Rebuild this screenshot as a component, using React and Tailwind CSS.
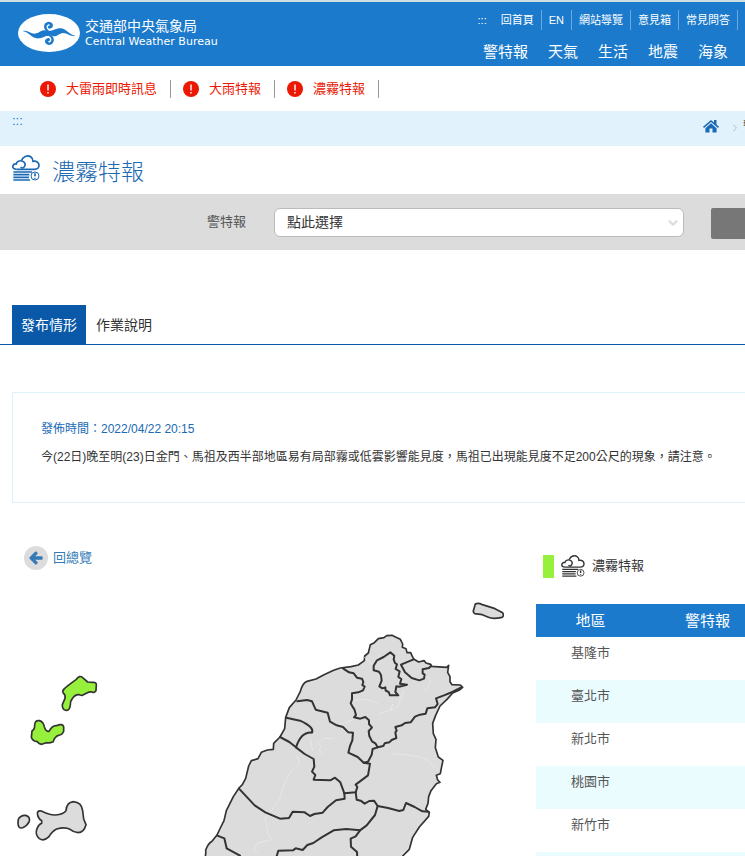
import { FaArrowLeft } from 'react-icons/fa';
import { ChevronDown, ChevronRight } from 'lucide-react';

const topLinks = ['回首頁', 'EN', '網站導覽', '意見箱', '常見問答'];
const mainLinks = ['警特報', '天氣', '生活', '地震', '海象'];
const alerts = ['大雷雨即時訊息', '大雨特報', '濃霧特報'];
const regions = ['基隆市', '臺北市', '新北市', '桃園市', '新竹市', '新竹縣'];

const Logo = () => (
  <svg viewBox="0 0 186 114" className="w-[62px] h-[38px] shrink-0" aria-hidden="true">
    <ellipse cx="93" cy="57" rx="93" ry="57" fill="#fff" />
    <g fill="#1b7acb">
      <path d="M14 51 C30 47 36 59 50 59 C64 58 68 48 80 49 C86 50 92 55 99 58 L91 66 C82 64 78 71 62 73 C42 75 36 55 14 51 Z" />
      <path d="M172 65 C156 69 150 57 136 57 C122 58 118 68 106 67 C100 66 94 61 87 58 L95 50 C104 52 108 45 124 43 C144 41 150 61 172 65 Z" />
      <path d="M92 55 C74 50 73 24 93 23 C108 24 109 43 95 44 C88 43 88 35 94 35 C98 32 93 28 88 33 C83 39 86 48 99 53 Z" />
      <path d="M94 61 C112 66 113 92 93 93 C78 92 77 73 91 72 C98 73 98 81 92 81 C88 84 93 88 98 83 C103 77 100 68 87 63 Z" />
    </g>
  </svg>
);

const HomeIcon = () => (
  <svg viewBox="0 0 16 14" className="h-[14px] w-4 shrink-0" fill="currentColor" aria-hidden="true">
    <path d="M8 1 L11 3.5 V1 H13.5 V5.6 L16 7.8 L15 9 L8 3 L1 9 L0 7.8 Z" />
    <path d="M8 4.3 L13.6 9.2 V13.5 H9.5 V9.6 H6.5 V13.5 H2.4 V9.2 Z" />
  </svg>
);

const FogIcon = ({ className }) => (
  <svg viewBox="0 0 84 78" className={className} fill="none" stroke="currentColor" strokeWidth="5" aria-hidden="true">
    <path d="M14 43 C5 43 1 38 3 32 C5 27 9 26 13 27 C14 19 23 16 30 18 C38 20 42 28 37 35 C34 40 29 40 26 36" />
    <path d="M28 17 C34 3 48 -1 57 6 C62 10 63 15 63 19 C73 17 81 22 81 31 C81 39 75 43 67 43 L14 43" />
    <path d="M4 51 H60 M4 59 H52 M4 67 H51 M4 75 H54" />
    <circle cx="69" cy="63" r="12" strokeWidth="3" />
    <path d="M69 55 V64 M69 68 V71" />
  </svg>
);

const AlertBadge = () => (
  <svg viewBox="0 0 16 16" className="size-4 shrink-0" aria-hidden="true">
    <circle cx="8" cy="8" r="8" fill="#eb1803" />
    <path d="M8 3.5 V9.5 M8 11 V12.5" stroke="#fff" strokeWidth="1.4" />
  </svg>
);

const TaiwanMap = () => (
  <svg viewBox="36 1770 1572 798" className="block w-full" role="img" aria-label="濃霧特報地圖">
    <g stroke="#333" strokeWidth="5" strokeLinejoin="round" strokeLinecap="round" fill="#dcdcdc">
      {/* Matsu and Kinmen */}
      <g transform="translate(0 1590)">
        <path
          fill="#96f03c"
          d="M188 484 Q190 477 200 470 Q216 457 229 448 Q239 434 248 443 L263 456 L278 457 Q290 456 289 465 L288 482 Q284 490 276 486 Q268 485 262 488 L250 494 Q247 498 238 494 Q225 493 217 506 Q210 514 211 525 Q209 542 199 541 Q186 540 187 524 L195 505 Q197 494 190 490 Z"
        />
        <path
          fill="#96f03c"
          d="M96 603 Q105 597 104 585 Q105 570 118 572 Q130 575 133 590 Q137 606 147 604 Q157 586 169 587 Q188 579 191 590 L191 604 Q187 615 176 616 Q163 621 160 635 Q148 640 139 638 L125 643 Q116 641 112 635 Q98 634 94 622 Z"
        />
        <path d="M55 868 Q61 855 77 856 Q91 860 88 874 Q82 887 68 893 Q54 898 54 878 Z" />
        <path d="M113 855 Q109 841 124 843 Q150 856 166 855 Q192 853 198 842 Q200 817 220 815 Q245 817 248 842 L251 867 L258 884 Q252 907 234 908 Q220 906 210 898 Q195 890 170 897 Q157 903 147 920 Q132 935 118 926 Q104 914 111 896 Q116 883 125 880 L125 872 Q115 866 113 855 Z" />
      </g>

      <g transform="translate(570 1860)">
        <path d="M40 730 Q49 705 47 690 Q55 670 66 664 L81 645 L91 624 L102 602 L109 572 L130 530 L147 504 L157 494 L167 475 L176 438 L184 422 L204 416 L214 397 L232 390 L250 388 L251 370 L270 351 L284 326 L287 292 L298 263 L318 240 L331 214 Q338 188 351 184 L378 177 L402 164 L431 151 L451 144 L483 140 L505 135 L523 122 L524 108 L535 99 L541 74 L553 68 L565 56 L582 53 L590 47 L606 46 L618 52 L631 58 L638 72 L637 82 L648 86 L651 98 L662 98 L666 107 L671 117 L686 126 L702 122 L708 129 L722 133 L724 139 L770 142 L776 136 L773 157 L780 170 L780 185 L786 194 L811 195 L818 202 L807 211 L788 219 L771 238 L750 258 L737 286 L728 310 L730 341 L738 358 L736 383 L745 411 L759 421 L755 440 L751 461 L739 466 L743 480 L750 487 L739 491 L723 512 L716 530 L714 550 L707 568 L718 577 L716 589 L688 621 L668 652 L658 688 L636 710 L630 740 Z" />

        {/* rivers */}
        <path
          fill="none"
          stroke="#ebebeb"
          strokeWidth="2"
          d="M523 112 L545 132 M492 242 Q520 234 552 243 L567 255 M565 282 L600 270 L609 251 L602 272 L625 258 L640 212 M700 168 Q725 170 720 190 L705 215 M607 402 L655 404 L710 417 L740 447 M400 402 L388 392 L392 378 L384 370 L398 355 L431 356 M360 358 L368 392 M440 315 L469 307 L500 294 M320 408 L330 428 L298 462 L280 500 L268 541 L225 594 L234 641 L245 659 L201 670 L193 690 L206 704 M635 706 L655 680"
        />

        {/* county borders */}
        <g fill="none" strokeWidth="6">
          <path d="M459 145 L477 157 L491 160 L501 173 L516 176 L520 186 L517 195 L524 200 L519 211 L505 217 L486 220 L486 238 L482 250 L487 259 L493 268 L498 285 L492 292 L511 296 L526 291 L537 301 L537 312 L546 323 L536 333 L538 348 L546 364 L556 370 L563 382 L580 378 L584 370 L598 367 L605 360 L619 354 L616 337 L620 332 L616 321 L635 316 L645 309 L662 307 L675 290 L690 284 L707 281 L712 265 L735 262 L743 252 L738 235 L760 227 L787 216 L814 202" />
          <path d="M563 382 L548 387 L545 404 L534 425 L521 428 L503 411 L475 398 L480 378 L487 361 L489 338 L475 337 L459 321 L440 316 L420 305 L413 278 L377 269 L366 244 L351 240 L322 244" />
          <path d="M289 293 L330 302 Q374 322 366 338 Q334 334 318 382 L298 366 L270 351" />
          <path d="M318 382 L344 402 L371 417 L373 440 L366 455 L376 465 L371 479 L421 481 L435 473 L451 487 L463 520 L497 517 L502 501 L497 494 L534 466 L540 431 L521 428" />
          <path d="M463 520 L464 536 L438 541 L413 561 L398 578 L373 582 L360 588 L344 577 L308 575 L297 594 L270 596 L226 577 L194 556 L147 506" />
          <path d="M497 517 L500 539 L512 542 L524 551 L538 543 L552 542 L563 558 L594 564 L628 573 L640 570 L648 549 L674 561 L697 574 L716 575" />
          <path d="M563 558 L555 585 L530 616 L510 631 L497 649 L482 656 L483 680 L501 696 L502 715" />
          <path d="M510 631 L469 627 L431 631 L395 652 L370 669 L352 675 L338 690 L317 685 L309 691 L265 692 L258 715" />
          <path d="M82 647 L103 655 L110 685 L150 707" />
          <path d="M601 97 L613 107 L611 118 L615 129 L621 133 L617 147 L629 154 L625 171 L634 177 L630 191 L651 194 L627 200 L619 199 L616 216 L625 226 L600 226 L596 216 L587 212 L586 202 L577 205 L568 199 L575 182 L573 165 L567 155 L551 151 L551 137 L561 121 L581 111 Z" />
          <path d="M671 118 L633 134 L645 157 L665 174 L688 181 L702 176 L704 164 L698 160 L698 148 L717 144 L724 137" />
        </g>
      </g>

      <path transform="translate(1380 1590)" d="M46 222 Q55 217 67 224 L105 236 L128 248 Q134 261 123 263 Q98 268 85 262 L67 254 L44 251 Q38 247 41 239 Z" />
    </g>
  </svg>
);

const App = () => {
  return (
    <div className="h-screen overflow-hidden bg-white text-[#333] text-[13px] leading-5 font-['Liberation_Sans','Noto_Sans_CJK_TC',sans-serif]">
      <header className="flex h-[66px] justify-between border-t-2 border-[#cfdde5] bg-[#1b7acb] pl-[18px] text-white">
        <a href="#" className="flex items-start gap-[5px] pt-3">
          <Logo />
          <span className="flex flex-col pt-[2px]">
            <span className="text-sm leading-5 whitespace-nowrap">交通部中央氣象局</span>
            <span className="text-[11px] leading-3 whitespace-nowrap font-['DejaVu_Sans',sans-serif]">Central Weather Bureau</span>
          </span>
        </a>
        <div className="flex flex-col items-end gap-[10px] pt-2">
          <nav className="flex items-center pr-[7px] text-[11px]">
            <a href="#" className="px-[7px]">:::</a>
            {topLinks.map((link) => (
              <a key={link} href="#" className="border-r border-[#69aae0] px-[7px] whitespace-nowrap">{link}</a>
            ))}
          </nav>
          <nav className="flex gap-5 pr-[17px] text-[15px] leading-6">
            {mainLinks.map((link) => (
              <a key={link} href="#" className="whitespace-nowrap">{link}</a>
            ))}
          </nav>
        </div>
      </header>

      <ul className="flex h-[45px] items-center pl-10 text-[#eb1803]">
        {alerts.map((alert) => (
          <li key={alert} className="mr-3 flex h-[18px] items-center border-r border-[#999] pr-[13px]">
            <a href="#" className="flex items-center gap-[10px] whitespace-nowrap">
              <AlertBadge />
              {alert}
            </a>
          </li>
        ))}
      </ul>

      <div className="flex h-[35px] justify-between bg-[#e2f2fc] pl-3 text-[#1b7acb]">
        <a href="#">:::</a>
        <div className="flex w-[42px] items-center overflow-hidden pb-[5px] text-[#1b6ab4]">
          <a href="#" aria-label="首頁"><HomeIcon /></a>
          <ChevronRight size={12} className="mt-1 ml-[10px] shrink-0 text-[#bbb]" />
          <a href="#" className="ml-[2px] shrink-0 text-[#555]">警特報</a>
        </div>
      </div>

      <div className="flex h-12 items-center gap-3 pl-3 text-[#1b68b3]">
        <FogIcon className="mb-1 h-[26px] w-7" />
        <h1 className="pt-1 text-[23px] leading-8 font-light">濃霧特報</h1>
      </div>

      <form className="flex h-14 items-center bg-[#dcdcdc] pl-[207px]">
        <label htmlFor="warning" className="mr-7 shrink-0 text-[#555]">警特報</label>
        <div className="relative flex-1">
          <select id="warning" className="h-[29px] w-full appearance-none rounded-md border border-[#bbb] bg-white px-3 text-sm text-[#333]">
            <option>點此選擇</option>
          </select>
          <ChevronDown size={14} strokeWidth={4} className="pointer-events-none absolute top-2 right-1 text-[#ddd]" />
        </div>
        <button type="button" aria-label="查詢" className="mt-[2px] ml-[27px] h-[31px] w-[34px] rounded-l-xs bg-[#777]" />
      </form>

      <div className="mt-[55px] flex h-10 border-b border-[#0a59a8] pl-3">
        <button type="button" className="bg-[#0a59a8] px-[9px] text-sm text-white">發布情形</button>
        <button type="button" className="px-[10px] text-sm">作業說明</button>
      </div>

      <section className="mt-[47px] ml-3 h-[111px] overflow-hidden border border-r-0 border-[#dff1f8] pt-[26px] pl-7 text-xs whitespace-nowrap">
        <p className="leading-5 text-[#1b6ab4]">發佈時間：2022/04/22 20:15</p>
        <p className="mt-2 leading-5">
          今(22日)晚至明(23)日金門、馬祖及西半部地區易有局部霧或低雲影響能見度，馬祖已出現能見度不足200公尺的現象，請注意。
        </p>
      </section>

      <main className="mt-[43px] flex pl-3">
        <div className="flex-1">
          <a href="#" className="ml-3 flex w-fit items-center gap-[5px] text-[#337ab7]">
            <span className="flex size-6 items-center justify-center rounded-full bg-[#dcdcdc]">
              <FaArrowLeft size={14} strokeWidth={40} />
            </span>
            回總覽
          </a>
          <div className="mt-5">
            <TaiwanMap />
          </div>
        </div>

        <div className="w-[209px] shrink-0">
          <div className="mt-[6px] ml-[7px] flex h-7 items-center">
            <span className="h-[23px] w-[11px] bg-[#96f03c]" />
            <FogIcon className="mx-[7px] h-[22px] w-6" />
            <span>濃霧特報</span>
          </div>
          <table className="mt-6 w-full table-fixed">
            <thead className="bg-[#1b7acb] text-[15px] text-white">
              <tr className="h-[33px]">
                <th className="w-[109px] font-normal">地區</th>
                <th className="pr-[7px] pl-10 text-left font-normal whitespace-nowrap">警特報</th>
              </tr>
            </thead>
            <tbody className="text-[#555]">
              {regions.map((region) => (
                <tr key={region} className="h-[43px] align-top even:bg-[#ebfcff]">
                  <td className="pt-[6px] text-center">{region}</td>
                  <td />
                </tr>
              ))}
            </tbody>
          </table>
        </div>
      </main>
    </div>
  );
};

export default App;
